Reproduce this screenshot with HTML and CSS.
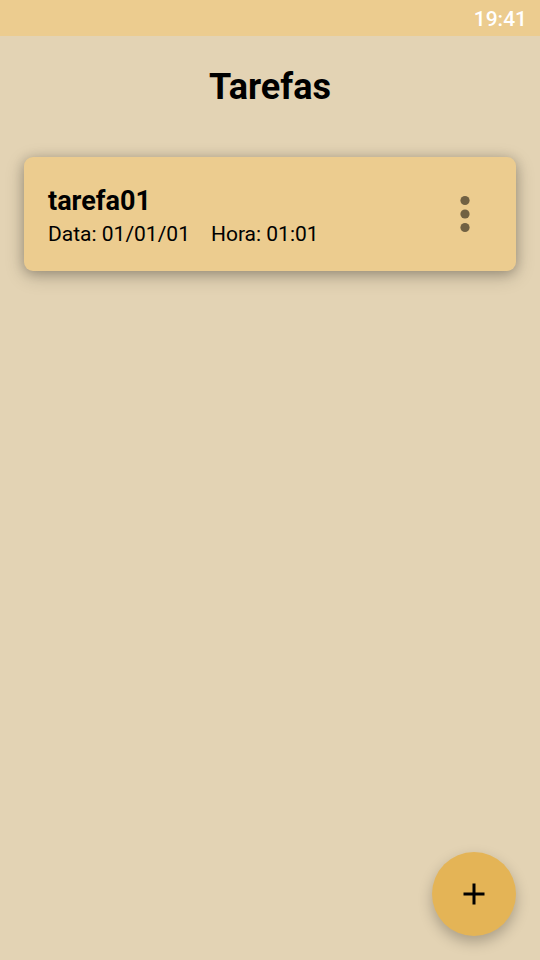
FILE: index.html
```html
<!DOCTYPE html>
<html lang="pt">
<head>
<meta charset="utf-8">
<meta name="viewport" content="width=device-width, initial-scale=1">
<title>Tarefas</title>
<link rel="stylesheet" href="styles.css">
</head>
<body>
<header class="status-bar"><time>19:41</time></header>
<main>
  <h1 class="title">Tarefas</h1>
  <ul class="tasks">
    <li class="task">
      <div class="task-info">
        <h2 class="task-name">tarefa01</h2>
        <p class="task-meta"><span>Data: 01/01/01</span><span>Hora: 01:01</span></p>
      </div>
      <button class="icon-button" type="button" aria-label="Mais opções">
        <svg width="36" height="48" viewBox="0 0 36 48" aria-hidden="true"><circle cx="18" cy="10.5" r="4.6"/><circle cx="18" cy="24" r="4.6"/><circle cx="18" cy="37.5" r="4.6"/></svg>
      </button>
    </li>
  </ul>
</main>
<button class="fab" type="button" aria-label="Adicionar tarefa">
  <svg width="36" height="36" viewBox="0 0 24 24" aria-hidden="true"><path d="M19 13h-6v6h-2v-6H5v-2h6V5h2v6h6v2z"/></svg>
</button>
</body>
</html>
```
FILE: styles.css
```css
* {
  box-sizing: border-box;
  margin: 0;
  padding: 0;
}

body {
  min-height: 100vh;
  background: #e3d3b4;
  color: #000;
  font-family: Roboto, sans-serif;
}

button {
  border: 0;
  cursor: pointer;
}

.status-bar {
  display: flex;
  align-items: center;
  justify-content: flex-end;
  height: 36px;
  padding: 2px 13px 0;
  background: #eccc8f;
  color: #fff;
  font-size: 21px;
  font-weight: 500;
}

.title {
  padding: 29px 24px 0;
  font-size: 36px;
  line-height: 44px;
  text-align: center;
}

.tasks {
  padding: 48px 24px 24px;
  list-style: none;
}

.task {
  display: flex;
  align-items: center;
  justify-content: space-between;
  padding: 25px 33px 23px 24px;
  border-radius: 9px;
  background: #eccc8f;
  box-shadow: 0 5px 20px rgba(0, 0, 0, 0.2), 0 2px 12px rgba(0, 0, 0, 0.22);
}

.task-name {
  font-size: 27px;
  line-height: 39px;
}

.task-meta {
  display: flex;
  flex-wrap: wrap;
  gap: 21px;
  font-size: 21px;
  line-height: 27px;
}

.icon-button {
  display: flex;
  margin: -1px 0 1px;
  background: none;
}

.icon-button svg {
  fill: #716143;
}

.fab {
  position: fixed;
  right: 24px;
  bottom: 24px;
  display: flex;
  align-items: center;
  justify-content: center;
  width: 84px;
  height: 84px;
  border-radius: 50%;
  background: #e4b456;
  box-shadow: 0 6px 14px rgba(0, 0, 0, 0.25);
}
```
